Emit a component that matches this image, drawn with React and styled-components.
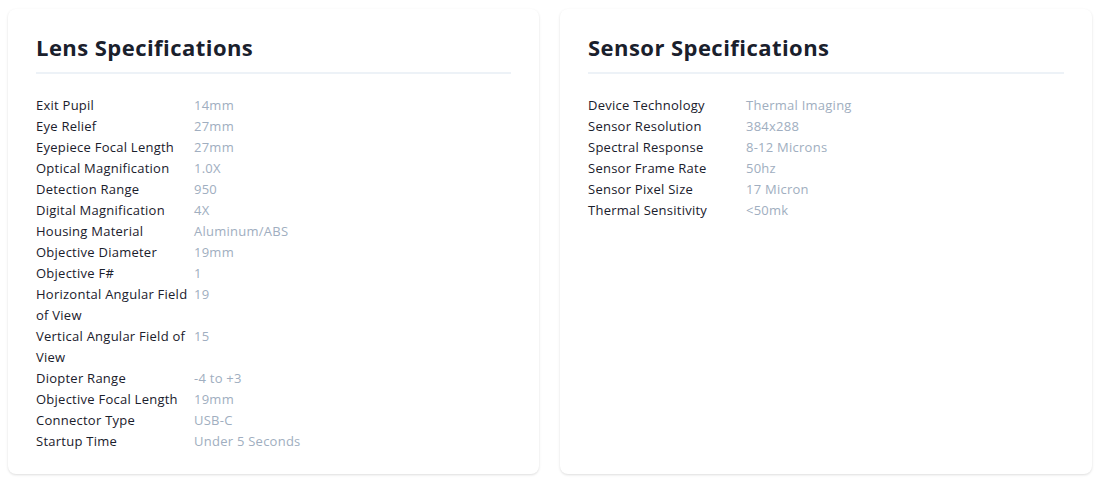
import React from 'react';
import styled, { createGlobalStyle } from 'styled-components';

const lens = [
  ['Exit Pupil', '14mm'],
  ['Eye Relief', '27mm'],
  ['Eyepiece Focal Length', '27mm'],
  ['Optical Magnification', '1.0X'],
  ['Detection Range', '950'],
  ['Digital Magnification', '4X'],
  ['Housing Material', 'Aluminum/ABS'],
  ['Objective Diameter', '19mm'],
  ['Objective F#', '1'],
  ['Horizontal Angular Field of View', '19'],
  ['Vertical Angular Field of View', '15'],
  ['Diopter Range', '-4 to +3'],
  ['Objective Focal Length', '19mm'],
  ['Connector Type', 'USB-C'],
  ['Startup Time', 'Under 5 Seconds'],
];

const sensor = [
  ['Device Technology', 'Thermal Imaging'],
  ['Sensor Resolution', '384x288'],
  ['Spectral Response', '8-12 Microns'],
  ['Sensor Frame Rate', '50hz'],
  ['Sensor Pixel Size', '17 Micron'],
  ['Thermal Sensitivity', '<50mk'],
];

function SpecCard({ title, rows }) {
  return (
    <Card>
      <Title>{title}</Title>
      <SpecList>
        {rows.map(([label, value]) => (
          <React.Fragment key={label}>
            <Label>{label}</Label>
            <Value>{value}</Value>
          </React.Fragment>
        ))}
      </SpecList>
    </Card>
  );
}

export default function App() {
  return (
    <>
      <GlobalStyle />
      <Page>
        <SpecCard title="Lens Specifications" rows={lens} />
        <SpecCard title="Sensor Specifications" rows={sensor} />
      </Page>
    </>
  );
}

const GlobalStyle = createGlobalStyle`
  body {
    margin: 0;
    background: #fff;
    font-family: 'Open Sans', sans-serif;
  }
`;

const Page = styled.main`
  display: grid;
  grid-template-columns: 531px 532px;
  column-gap: 21px;
  padding: 9px 17px 16px 8px;
`;

const Card = styled.section`
  background: #fff;
  border-radius: 8px;
  box-shadow: 0 1px 3px rgba(0, 0, 0, 0.1), 0 1px 2px rgba(0, 0, 0, 0.04);
  padding: 23px 28px 22px;
`;

const Title = styled.h2`
  margin: 0;
  padding-bottom: 10px;
  border-bottom: 2px solid #edf2f7;
  font-family: 'Open Sans', sans-serif;
  font-weight: 700;
  font-size: 22px;
  line-height: 30px;
  letter-spacing: 0.45px;
  color: #1a202c;
`;

const SpecList = styled.dl`
  display: grid;
  grid-template-columns: 158px 1fr;
  margin: 21px 0 0;
  font-size: 13px;
  line-height: 21px;
  letter-spacing: 0.25px;
`;

const Label = styled.dt`
  color: #1a202c;
`;

const Value = styled.dd`
  margin: 0;
  color: #a0aec0;
`;
